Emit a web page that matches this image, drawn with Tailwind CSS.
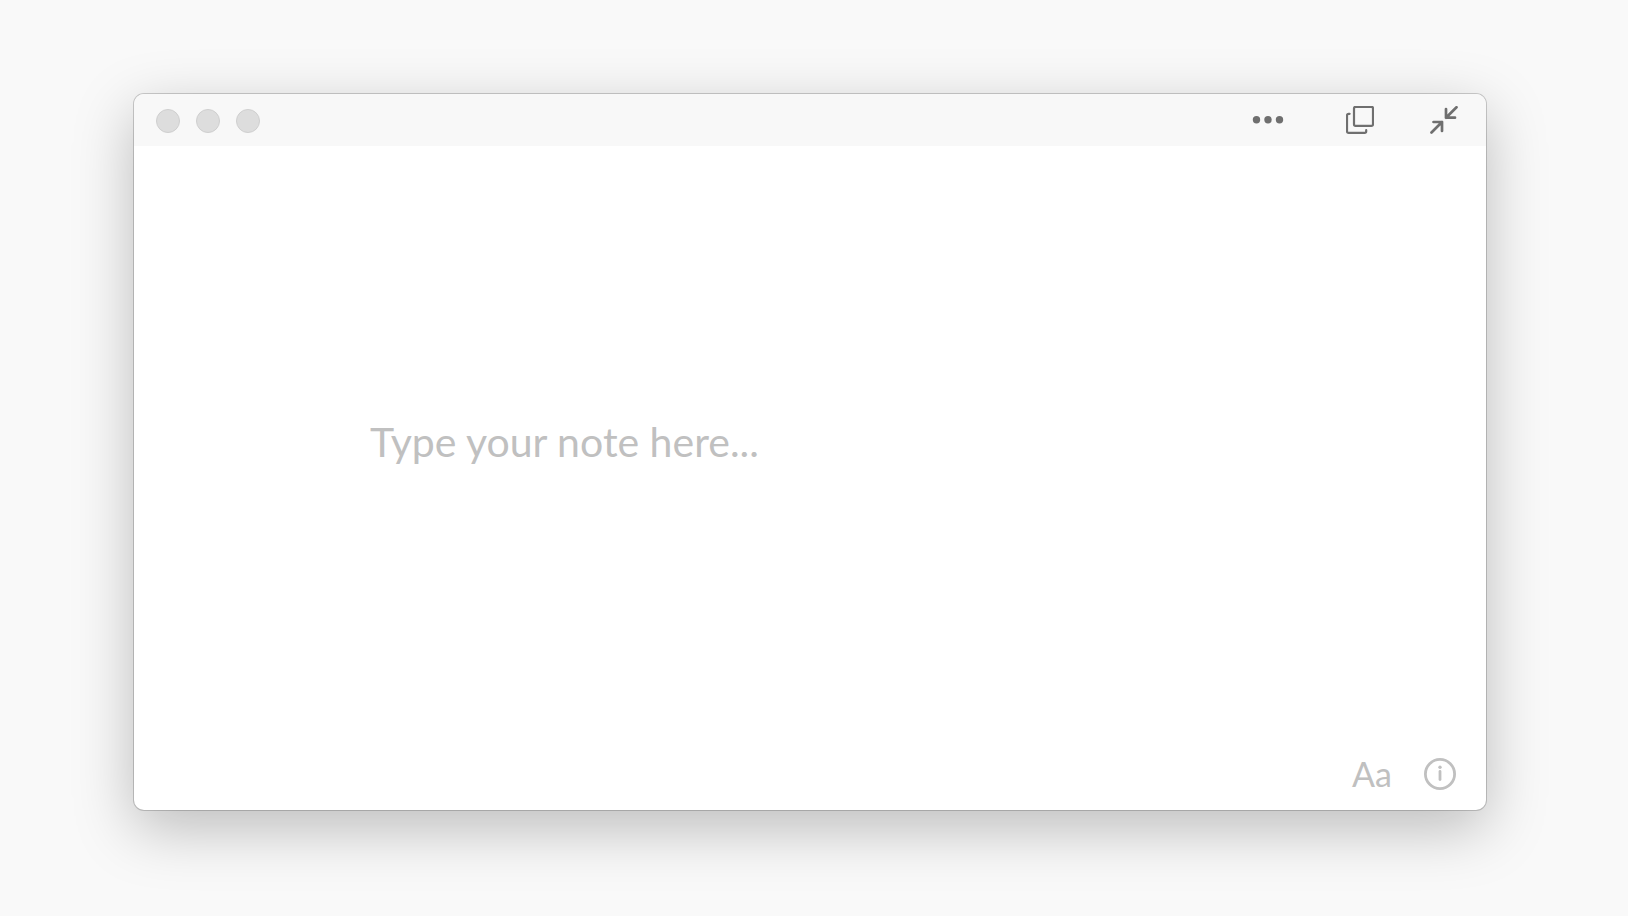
<!DOCTYPE html>
<html lang="en">
<head>
	<meta charset="UTF-8">
	<meta name="viewport" content="width=device-width, initial-scale=1.0">
	<title>Note</title>
	<script src="https://cdn.jsdelivr.net/npm/@tailwindcss/browser@4"></script>
</head>
<body class="flex min-h-screen bg-[#f9f9f9] pt-[94px] pr-[142px] pb-[106px] pl-[134px] font-['Lato','Open_Sans',sans-serif] antialiased">
	<div class="flex min-w-0 flex-1 flex-col overflow-hidden rounded-[10px] bg-white shadow-[0_0_0_1px_rgba(0,0,0,0.18),0_18px_60px_rgba(0,0,0,0.25)]">
		<!-- Title bar -->
		<header class="flex h-[52px] items-center justify-between bg-[#f8f8f8] pr-7 pl-[22px]">
			<div class="flex gap-4 pt-0.5">
				<button class="size-6 rounded-full border border-[#cfcfcf] bg-[#dddddd]" aria-label="Close"></button>
				<button class="size-6 rounded-full border border-[#cfcfcf] bg-[#dddddd]" aria-label="Minimize"></button>
				<button class="size-6 rounded-full border border-[#cfcfcf] bg-[#dddddd]" aria-label="Zoom"></button>
			</div>
			<div class="flex items-center text-[#6f6f6f]">
				<button class="mr-[62px]" aria-label="More">
					<svg class="block h-7 w-8" viewBox="0 0 32 28" fill="currentColor">
						<circle cx="4.5" cy="13.8" r="3.7"/>
						<circle cx="16" cy="13.8" r="3.7"/>
						<circle cx="27.5" cy="13.8" r="3.7"/>
					</svg>
				</button>
				<button class="mr-14" aria-label="Duplicate note">
					<svg class="block size-7" viewBox="0 0 28 28" fill="none" stroke="currentColor" stroke-width="2.2" stroke-linecap="round" stroke-linejoin="round">
						<rect x="8" y="0.8" width="19" height="19" rx="1.6"/>
						<path d="M3.6 7.8H2.6a1.6 1.6 0 0 0-1.6 1.6v15.8a1.6 1.6 0 0 0 1.6 1.6h16a1.6 1.6 0 0 0 1.6-1.6v-1"/>
					</svg>
				</button>
				<button aria-label="Collapse">
					<svg class="block size-7" viewBox="0 0 28 28" fill="none" stroke="currentColor" stroke-width="2.7" stroke-linecap="round" stroke-linejoin="round">
						<path d="M26.5 1.3 16 11.7M16 3V11.7h9"/>
						<path d="M1.5 26.5 12 16M3.5 16H12v9"/>
					</svg>
				</button>
			</div>
		</header>

		<!-- Note -->
		<main class="flex flex-1 items-center px-[236px]">
			<input type="text" aria-label="Note" placeholder="Type your note here..." class="w-full text-[41px] leading-[52px] text-[#444444] placeholder:text-[#c0c0c0] focus:outline-none">
		</main>

		<!-- Bottom tools -->
		<footer class="flex h-[72px] items-center justify-end gap-8 pr-[30px] text-[#c0c0c0]">
			<button class="text-[34px] leading-10" aria-label="Text style">Aa</button>
			<button aria-label="Info">
				<svg class="block size-8" viewBox="0 0 32 32" fill="none" stroke="currentColor" stroke-width="2.8" stroke-linecap="round">
					<circle cx="16" cy="16" r="14.6"/>
					<path d="M16 13.5v8"/>
					<circle cx="16" cy="9.2" r="1.7" fill="currentColor" stroke="none"/>
				</svg>
			</button>
		</footer>
	</div>
</body>
</html>
